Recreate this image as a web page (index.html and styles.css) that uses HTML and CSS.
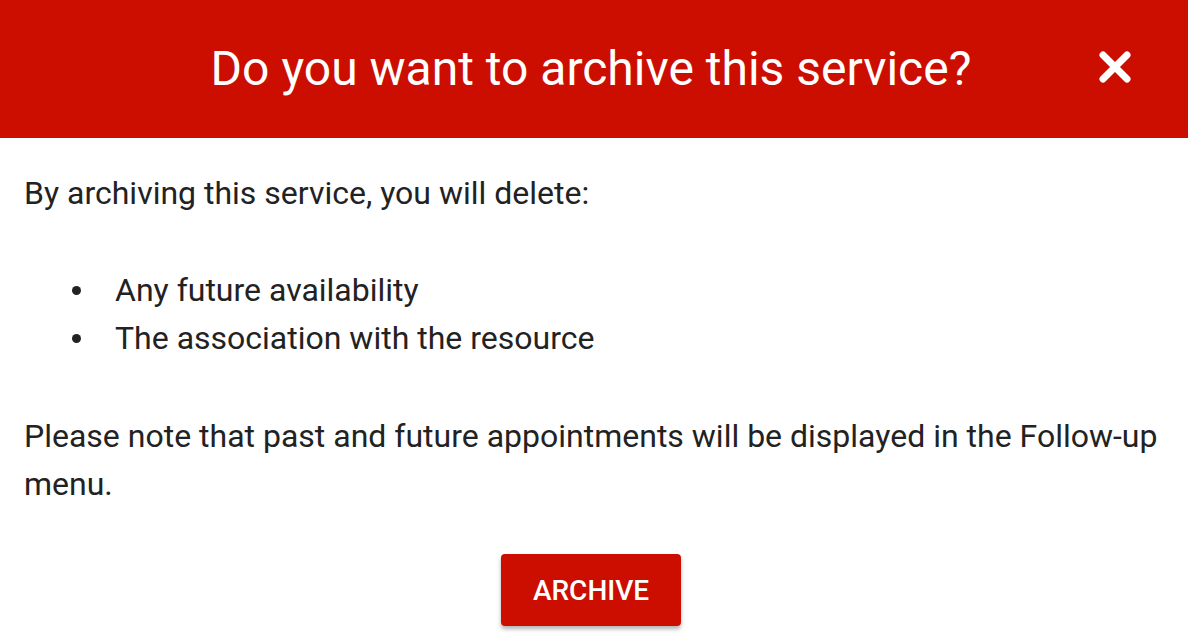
FILE: index.html
```html
<!DOCTYPE html>
<html>
<head>
<meta charset="utf-8">
<link rel="stylesheet" href="styles.css">
</head>
<body>
<div class="dialog">
  <header class="dialog-header">
    <h1 class="dialog-title">Do you want to archive this service?</h1>
    <button class="close-btn" aria-label="Close">
      <svg width="34" height="34" viewBox="0 0 34 34"><path d="M5 5 L29 29 M29 5 L5 29" stroke="#fff" stroke-width="7" stroke-linecap="round"/></svg>
    </button>
  </header>
  <div class="dialog-body">
    <p class="text">By archiving this service, you will delete:</p>
    <ul class="list">
      <li>Any future availability</li>
      <li>The association with the resource</li>
    </ul>
    <p class="text">Please note that past and future appointments will be displayed in the Follow-up menu.</p>
    <div class="actions">
      <button class="archive-btn">ARCHIVE</button>
    </div>
  </div>
</div>
</body>
</html>
```
FILE: styles.css
```css
html, body {
  margin: 0;
  padding: 0;
  background: #fff;
  font-family: Roboto, "Liberation Sans", sans-serif;
}
.dialog {
  width: 1188px;
  height: 642px;
  overflow: hidden;
}
.dialog-header {
  position: relative;
  height: 138px;
  background: #cc0e00;
  display: flex;
  align-items: center;
  justify-content: center;
  padding-right: 6px;
}
.dialog-title {
  margin: 0;
  color: #fff;
  font-weight: 400;
  font-size: 48px;
  line-height: 1;
}
.close-btn {
  position: absolute;
  right: 56px;
  top: 50px;
  width: 34px;
  height: 34px;
  padding: 0;
  border: 0;
  background: none;
  display: flex;
}
.dialog-body {
  padding: 31px 30px 0 24px;
  color: #222;
  font-size: 32px;
  line-height: 48px;
}
.text {
  margin: 0;
}
.list {
  margin: 49px 0 50px 0;
  padding-left: 0;
  list-style: none;
}
.list li {
  display: flex;
  align-items: center;
  padding-left: 48px;
}
.list li::before {
  content: "";
  width: 9px;
  height: 9px;
  border-radius: 50%;
  background: #222;
  margin-right: 34px;
  flex: none;
}
.actions {
  display: flex;
  justify-content: center;
  padding-top: 46px;
}
.archive-btn {
  width: 180px;
  height: 72px;
  background: #cc0e00;
  color: #fff;
  border: 0;
  border-radius: 4px;
  font-family: Roboto, "Liberation Sans", sans-serif;
  font-weight: 500;
  font-size: 28px;
  box-shadow: 0 3px 4px rgba(0,0,0,0.3);
}
```
